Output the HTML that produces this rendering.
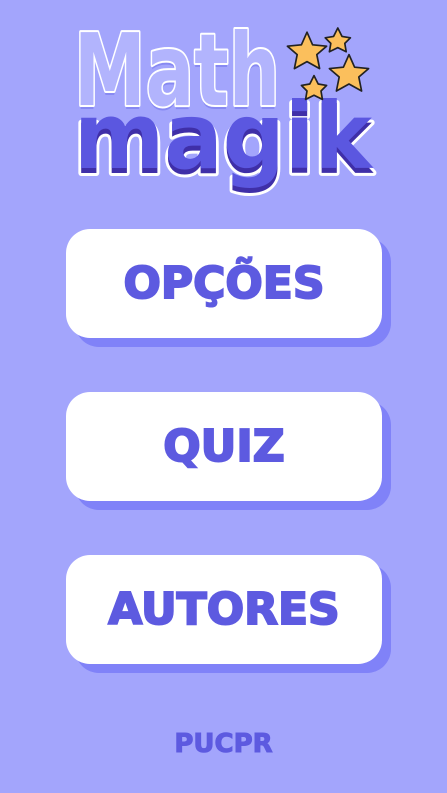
<!DOCTYPE html>
<html><head><meta charset="utf-8"><style>
html,body{margin:0;padding:0}
body{width:447px;height:793px;background:#a3a5fc;position:relative;overflow:hidden;font-family:"Liberation Sans","DejaVu Sans",sans-serif}
.btn{position:absolute;left:66px;width:316px;height:109px;background:#fff;border-radius:24px;box-shadow:9px 9px 0 #8082f8;display:flex;align-items:center;justify-content:center;color:#5d5ae0;font-weight:900;font-size:44px;letter-spacing:0px;font-family:"DejaVu Sans","Liberation Sans",sans-serif;-webkit-text-stroke:2px #5d5ae0}
.foot{position:absolute;left:0;right:0;top:729px;text-align:center;color:#5d5ae0;font-weight:900;font-size:26px;font-family:"DejaVu Sans",sans-serif;-webkit-text-stroke:1px #5d5ae0}
</style></head><body>
<svg width="447" height="210" style="position:absolute;left:0;top:0">
<g font-family="DejaVu Sans, Liberation Sans, sans-serif" font-weight="900" paint-order="stroke" stroke-linejoin="round">
<text x="74" y="105" font-size="100" fill="#8789f2" stroke="none" textLength="206" lengthAdjust="spacingAndGlyphs" dy="4">Math</text>
<text x="74" y="105" font-size="100" fill="#b2b4fd" stroke="#fff" stroke-width="4" textLength="206" lengthAdjust="spacingAndGlyphs">Math</text>
<text x="74" y="168" font-size="92" fill="#3f2fa8" stroke="#fff" stroke-width="6" textLength="298" lengthAdjust="spacingAndGlyphs" dy="5">magik</text>
<text x="74" y="168" font-size="92" fill="#5b57e0" stroke="none" textLength="298" lengthAdjust="spacingAndGlyphs">magik</text>
</g>
<g fill="#fbbf5c" stroke="#222" stroke-width="1.2" stroke-linejoin="round" transform="translate(328,63) scale(1.4) translate(-328,-63)">
<polygon points="313,41 317,50 327,51 320,57 322,67 313,62 304,67 306,57 299,51 309,50"/>
<polygon points="335,38 338,44 344,45 340,49 341,55 335,52 329,55 330,49 326,45 332,44"/>
<polygon points="343,57 347,66 357,67 350,73 352,83 343,78 334,83 336,73 329,67 339,66"/>
<polygon points="318,72 321,78 327,79 323,83 324,89 318,86 312,89 313,83 309,79 315,78"/>
</g>
</svg>
<div class="btn" style="top:229px">OPÇÕES</div>
<div class="btn" style="top:392px">QUIZ</div>
<div class="btn" style="top:555px">AUTORES</div>
<div class="foot">PUCPR</div>
</body></html>
